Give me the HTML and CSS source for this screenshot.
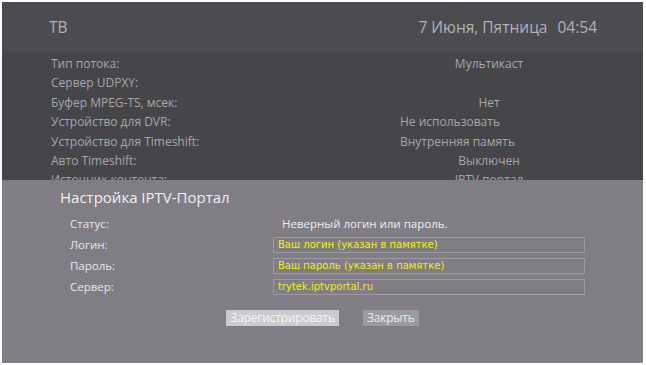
FILE: index.html
```html
<!DOCTYPE html>
<html lang="ru">
<head>
<meta charset="utf-8">
<link rel="stylesheet" href="styles.css">
</head>
<body>
<div class="screen">
  <header class="topbar">
    <span class="title">ТВ</span>
    <span class="clock"><span>7 Июня, Пятница</span><span>04:54</span></span>
  </header>
  <div class="settings">
    <div class="row"><span class="lbl">Тип потока:</span><span class="val c">Мультикаст</span></div>
    <div class="row"><span class="lbl">Сервер UDPXY:</span><span class="val c"></span></div>
    <div class="row"><span class="lbl">Буфер MPEG-TS, мсек:</span><span class="val c">Нет</span></div>
    <div class="row"><span class="lbl">Устройство для DVR:</span><span class="val">Не использовать</span></div>
    <div class="row"><span class="lbl">Устройство для Timeshift:</span><span class="val">Внутренняя память</span></div>
    <div class="row"><span class="lbl">Авто Timeshift:</span><span class="val c">Выключен</span></div>
    <div class="row"><span class="lbl">Источник контента:</span><span class="val c">IPTV портал</span></div>
  </div>
  <div class="dialog">
    <h1 class="dlg-title">Настройка IPTV-Портал</h1>
    <div class="form">
      <span class="flbl">Статус:</span><span class="status">Неверный логин или пароль.</span>
      <span class="flbl">Логин:</span><span class="input">Ваш логин (указан в памятке)</span>
      <span class="flbl">Пароль:</span><span class="input">Ваш пароль (указан в памятке)</span>
      <span class="flbl">Сервер:</span><span class="input">trytek.iptvportal.ru</span>
    </div>
    <div class="buttons">
      <span class="btn primary">Зарегистрировать</span>
      <span class="btn">Закрыть</span>
    </div>
  </div>
</div>
</body>
</html>
```
FILE: styles.css
```css
html, body { margin: 0; padding: 0; background: #ffffff; }
body { font-family: "Open Sans", "Noto Sans", sans-serif; }
.screen {
  margin: 2px 0 0 2px;
  width: 641px;
  height: 361px;
  background: #45454a;
  position: relative;
  overflow: hidden;
}
.topbar {
  height: 50px;
  background: #4b4b50;
  display: flex;
  align-items: center;
  justify-content: space-between;
  padding: 0 46px 0 47px;
  color: #b3b3b5;
  font-size: 15.5px;
}
.clock { display: flex; gap: 10px; }
.settings { padding-top: 2px; font-size: 12px; color: #a8a8aa; }
.row { display: flex; height: 19.4px; line-height: 19.4px; }
.lbl { width: 398px; padding-left: 49px; box-sizing: border-box; }
.val { width: 178px; }
.val.c { text-align: center; }
.dialog {
  position: absolute;
  left: 0; right: 0; top: 178px; bottom: 0;
  background: #807e84;
}
.dlg-title {
  margin: 0;
  padding: 7px 0 0 58px;
  font-size: 15px;
  line-height: 20px;
  font-weight: normal;
  color: #f0f0f0;
}
.form {
  display: grid;
  grid-template-columns: 203px 312px;
  grid-auto-rows: 16px;
  row-gap: 5px;
  padding: 9px 0 0 68px;
  font-size: 11.5px;
  line-height: 16px;
  color: #e8e8ea;
}
.status { padding-left: 9px; color: #eeeeee; }
.input {
  box-sizing: border-box;
  border: 1px solid #9d9ca1;
  padding-left: 4px;
  line-height: 14px;
  color: #f2f200;
  font-family: "DejaVu Sans", sans-serif;
  font-size: 10px;
}
.buttons {
  display: flex;
  justify-content: center;
  gap: 24px;
  margin-top: 15px;
}
.btn {
  height: 16px;
  line-height: 16px;
  padding: 0 4px;
  font-size: 12px;
  background: #9b9a9e;
  color: #ececec;
  letter-spacing: -0.2px;
}
.btn.primary { background: #cbcacd; color: #f6f6f6; }
```
